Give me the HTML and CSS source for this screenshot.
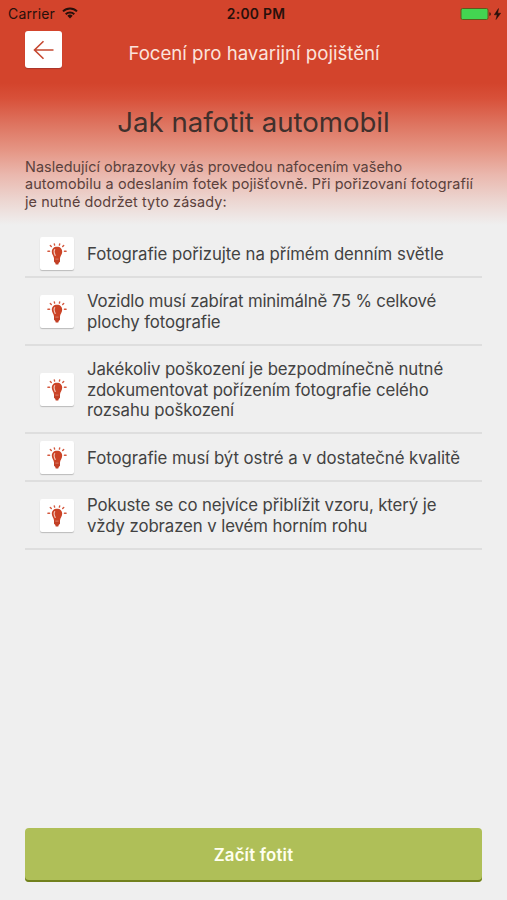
FILE: index.html
```html
<!DOCTYPE html>
<html lang="cs">
<head>
<meta charset="utf-8">
<title>Focení pro havarijní pojištění</title>
<link rel="stylesheet" href="styles.css">
</head>
<body>
<svg class="defs" width="0" height="0" aria-hidden="true">
  <symbol id="bulb" viewBox="0 0 20 22">
    <path d="M10 3.800c-3.300 0-5.200 2.100-5.200 5 0 2.600 2 4 2.300 7.200h5.800c.3-3.200 2.300-4.600 2.300-7.200 0-2.900-1.900-5-5.200-5z" fill="#cb4326"/>
    <path d="M7 15.500h6v3.300l-1.300 1.100-.4 1.600H8.700l-.4-1.600L7 18.800z" fill="#c23f25"/>
    <path d="M7.700 6.600c-1 1.200-.8 3 .5 5.800" fill="none" stroke="#f3c5b8" stroke-width="1.200" stroke-linecap="round"/>
    <path d="M8.300 16.100h3.300" stroke="#e79b87" stroke-width=".7"/>
    <path d="M.9 8.300h1.700M17.400 8.300h1.700M3.300 2.600l1 1M16.700 2.600l-1 1M7.300.9l.3 1.200M12.700.9l-.3 1.200" stroke="#d4593f" stroke-width="1.400" stroke-linecap="round"/>
  </symbol>
</svg>
<div class="screen">
  <div class="status">
    <div class="carrier"><span>Carrier</span>
      <svg class="wifi" viewBox="0 0 16 12"><g fill="none" stroke="#28100b" stroke-width="2"><path d="M1 4.400a10 10 0 0 1 14 0"/><path d="M3.700 7.200a6.200 6.200 0 0 1 8.600 0"/></g><path d="M5.300 8.800a3.900 3.900 0 0 1 5.400 0L8 11.600z" fill="#28100b"/></svg>
    </div>
    <div class="time">2:00 PM</div>
    <svg class="battery" viewBox="0 0 42 14"><rect x="1" y="1.500" width="27" height="11" rx="1.500" fill="#43d551" stroke="#5f5a1c"/><path d="M29.500 5.200c1.600.2 1.600 3.400 0 3.600z" fill="#28100b"/><path d="M38.500 1.500 34.300 7.800h2.900L36 12.500 40.700 6.200h-3z" fill="#28100b" stroke="#28100b" stroke-width=".5"/></svg>
  </div>
  <header class="nav">
    <button class="back" aria-label="Zpět"><svg viewBox="0 0 22 20"><path d="M20.500 10H1.500M10.500 1.200 1.500 10l9 8.800" fill="none" stroke="#c54831" stroke-width="1.600"/></svg></button>
    <div class="nav-title">Focení pro havarijní pojištění</div>
  </header>
  <main class="content">
    <h1>Jak nafotit automobil</h1>
    <p class="intro">Nasledující obrazovky vás provedou nafocením vašeho<br><span class="wide">automobilu a odeslaním fotek pojišťovně. Při pořizovaní fotografií</span><br><span class="wide">je nutné dodržet tyto zásady:</span></p>
    <ul class="tips">
      <li><span class="tile"><svg><use href="#bulb"/></svg></span><p class="loose">Fotografie pořizujte na přímém denním světle</p></li>
      <li><span class="tile"><svg><use href="#bulb"/></svg></span><p><span class="tight">Vozidlo musí zabírat minimálně 75 % celkové</span><br>plochy fotografie</p></li>
      <li><span class="tile"><svg><use href="#bulb"/></svg></span><p>Jakékoliv poškození je bezpodmínečně nutné<br>zdokumentovat pořízením fotografie celého<br>rozsahu poškození</p></li>
      <li><span class="tile"><svg><use href="#bulb"/></svg></span><p class="loose">Fotografie musí být ostré a v dostatečné kvalitě</p></li>
      <li><span class="tile"><svg><use href="#bulb"/></svg></span><p>Pokuste se co nejvíce přiblížit vzoru, který je<br>vždy zobrazen v levém horním rohu</p></li>
    </ul>
  </main>
  <button class="start">Začít fotit</button>
</div>
</body>
</html>
```
FILE: styles.css
```css
* { box-sizing: border-box; }
body { margin: 0; font-family: Inter, "Liberation Sans", sans-serif; color: #424242; }
p, h1, ul { margin: 0; padding: 0; font-weight: 400; }
button { border: 0; padding: 0; font: inherit; }
.defs { position: absolute; }
.screen {
  height: 900px;
  display: flex;
  flex-direction: column;
  padding: 0 25px 18px;
  background: linear-gradient(#d3442c 0, #d3442c 83px, #d85039 98px, #de7561 125px, #e59584 150px, #eab8ae 175px, #ecd5d0 200px, #efefef 225px, #efefef 100%);
}
.status {
  height: 27px;
  margin: 0 -25px;
  padding: 0 5px 0 8px;
  display: grid;
  grid-template-columns: 1fr auto 1fr;
  align-items: center;
  color: #28100b;
  font-size: 14px;
}
.carrier { display: flex; align-items: center; gap: 7px; }
.carrier span { letter-spacing: .15px; }
.wifi { width: 16px; height: 12px; margin-top: -2px; }
.time { font-weight: 600; letter-spacing: .3px; font-size: 13.800px; padding-left: 2px; }
.battery { width: 42px; height: 14px; justify-self: end; }
.nav { height: 56px; display: flex; align-items: flex-start; padding-top: 4px; }
.back {
  width: 37px; height: 37px;
  display: grid; place-items: center;
  background: #fff;
  border-radius: 3px;
  box-shadow: 0 1px 1px #a8352b;
}
.back svg { width: 22px; height: 20px; }
.nav-title { flex: 1; text-align: center; font-size: 18.650px; line-height: 44px; color: #fbe3dc; margin-right: 36px; }
.content { flex: 1; }
h1 { text-align: center; font-size: 27.600px; line-height: 36px; padding-top: 21px; color: #40302c; }
.intro { margin-top: 18px; font-size: 14.400px; line-height: 17.400px; letter-spacing: .05px; color: #5b413c; white-space: nowrap; }
.intro .wide { letter-spacing: .11px; }
.tips { list-style: none; margin-top: 20px; }
.tips li { height: 68px; display: flex; align-items: center; border-bottom: 2px solid #dedede; padding: 1px 0 0 15px; gap: 12px; }
.tips li:first-child, .tips li:nth-child(4) { height: 48px; }
.tips li:nth-child(3) { height: 88px; }
.tips p { font-size: 16.800px; line-height: 20.300px; letter-spacing: -.09px; white-space: nowrap; }
.tips .tight { letter-spacing: -.16px; }
.tips .loose { letter-spacing: -.05px; }
.tile { width: 34px; height: 33px; margin-right: 1px; background: #fff; border-radius: 2px; box-shadow: 0 1px 1px #bbb; display: grid; place-items: center; flex: none; }
.tile svg { width: 20px; height: 22px; }
.start { height: 54px; border-radius: 4px; background: #afbf58; box-shadow: inset 0 -2px #71801d; color: #fffff0; font-weight: 600; font-size: 16.800px; letter-spacing: .2px; }
```
